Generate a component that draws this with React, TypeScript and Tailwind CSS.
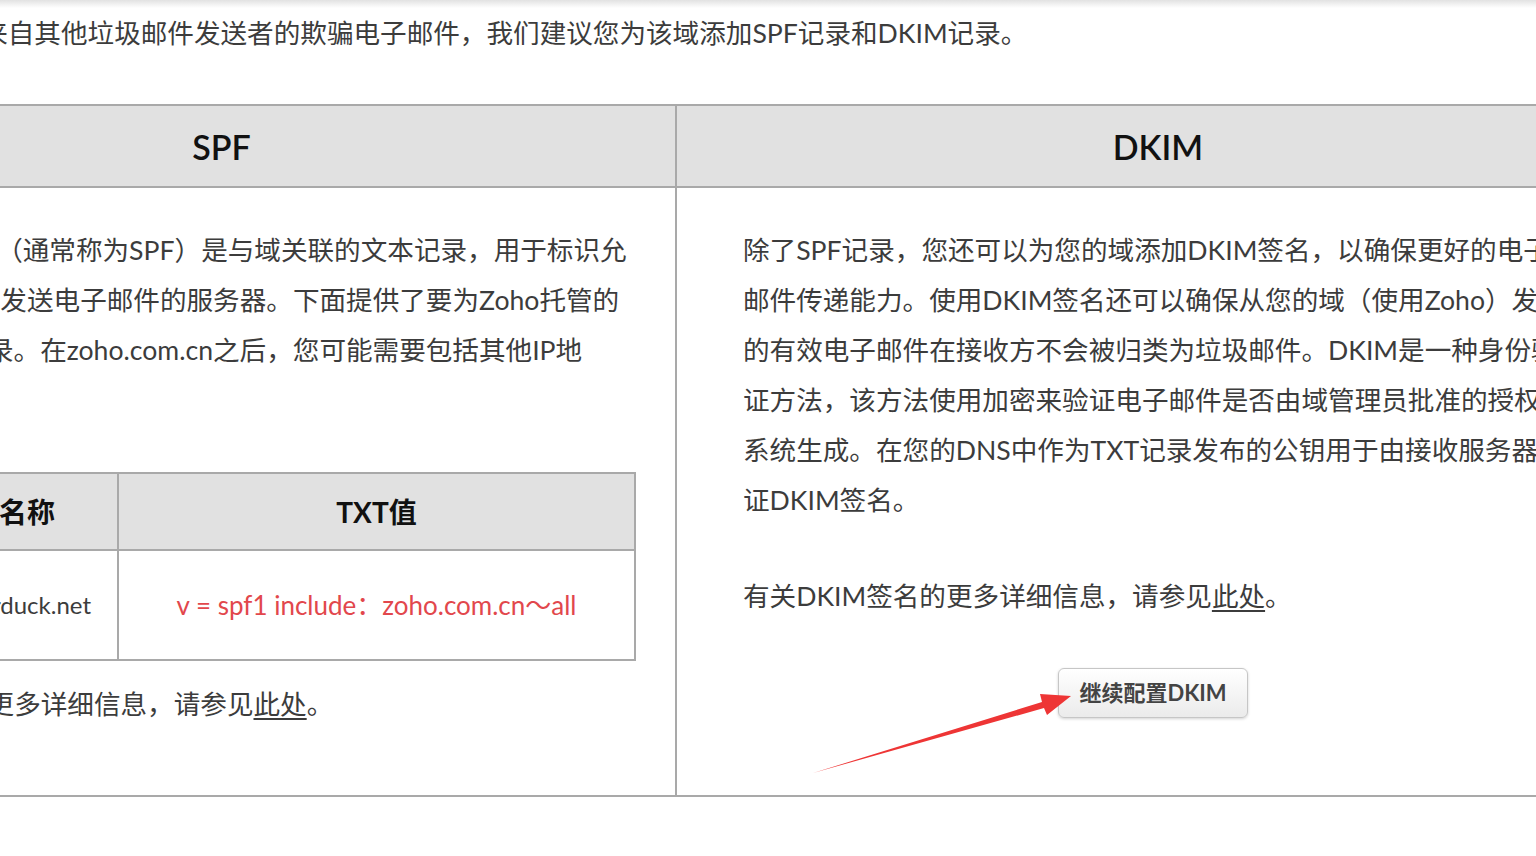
import React from "react";

const FONT = { fontFamily: 'Lato, "Noto Sans CJK SC", sans-serif' };

const dkimLines = [
  "除了SPF记录，您还可以为您的域添加DKIM签名，以确保更好的电子",
  "邮件传递能力。使用DKIM签名还可以确保从您的域（使用Zoho）发送",
  "的有效电子邮件在接收方不会被归类为垃圾邮件。DKIM是一种身份验",
  "证方法，该方法使用加密来验证电子邮件是否由域管理员批准的授权",
  "系统生成。在您的DNS中作为TXT记录发布的公钥用于由接收服务器验",
  "证DKIM签名。",
];

function Arrow() {
  return (
    <svg
      className="pointer-events-none absolute left-0 top-0"
      width="1536"
      height="856"
      viewBox="0 0 1536 856"
    >
      <polygon
        points="813,773 1042,702 1040,694 1071,696 1047,715 1044,708"
        fill="#ee3535"
      />
    </svg>
  );
}

export default function App() {
  return (
    <div
      className="relative h-[856px] w-[1536px] overflow-hidden bg-white text-[#3c3c3c]"
      style={FONT}
    >
      <div className="h-2 bg-gradient-to-b from-[#e2e2e2] to-white" />

      <div className="-ml-[232px] w-[1872px]">
        <p className="whitespace-nowrap pl-[160px] text-[26.6px] leading-[50px]">
          防止来自其他垃圾邮件发送者的欺骗电子邮件，我们建议您为该域添加SPF记录和DKIM记录。
        </p>

        <div className="mt-[46px] border-y-2 border-[#a9a9a9]">
          <div className="flex h-[82px] border-b-2 border-[#a9a9a9] bg-[#e1e1e1] text-[34px] font-semibold text-[#111]">
            <div className="flex w-[909px] items-center justify-center border-r-2 border-[#a9a9a9]">
              SPF
            </div>
            <div className="flex w-[962px] items-center justify-center">DKIM</div>
          </div>

          <div className="flex h-[607px]">
            <div className="w-[909px] border-r-2 border-[#a9a9a9] pt-[37px] text-[26.6px] leading-[50px]">
              <div className="whitespace-nowrap pl-[42px]">
                发件人策略框架（通常称为SPF）是与域关联的文本记录，用于标识允
              </div>
              <div className="whitespace-nowrap pl-[126px]">
                许从该域发送电子邮件的服务器。下面提供了要为Zoho托管的
              </div>
              <div className="whitespace-nowrap pl-[86px]">
                域添加的记录。在zoho.com.cn之后，您可能需要包括其他IP地
              </div>
              <div className="whitespace-nowrap pl-[68px]">址。</div>

              <div className="ml-[68px] mt-[47px] w-[800px] border-2 border-[#a9a9a9]">
                <div className="flex h-[77px] border-b-2 border-[#a9a9a9] bg-[#e1e1e1] text-[28px] font-bold text-[#111]">
                  <div className="flex w-[281px] items-center justify-end whitespace-nowrap border-r-2 border-[#a9a9a9] pr-[62px]">
                    主机名称
                  </div>
                  <div className="flex flex-1 items-center justify-center">TXT值</div>
                </div>
                <div className="flex h-[108px] text-[24px]">
                  <div className="flex w-[281px] items-center justify-end whitespace-nowrap border-r-2 border-[#a9a9a9] pr-[26px]">
                    zylkerduck.net
                  </div>
                  <div className="flex flex-1 items-center justify-center whitespace-nowrap text-[26px] text-[#e2474c]">
                    v = spf1 include：zoho.com.cn～all
                  </div>
                </div>
              </div>

              <div className="ml-[60px] mt-[18px] whitespace-nowrap">
                有关该记录的更多详细信息，请参见<span className="underline underline-offset-4">此处</span>。
              </div>
            </div>

            <div className="w-[962px] pl-[66px] pt-[37px] text-[26.6px] leading-[50px]">
              {dkimLines.map((line) => (
                <div key={line} className="whitespace-nowrap">
                  {line}
                </div>
              ))}
              <div className="mt-[46px] whitespace-nowrap">
                有关DKIM签名的更多详细信息，请参见<span className="underline underline-offset-4">此处</span>。
              </div>
              <button
                type="button"
                className="ml-[315px] mt-[47px] h-[50px] w-[190px] rounded-md border border-[#c6c6c6] bg-gradient-to-b from-white to-[#ebebeb] text-[22px] font-bold leading-none text-[#444] shadow-[0_1px_3px_rgba(0,0,0,0.18)]"
              >
                继续配置DKIM
              </button>
            </div>
          </div>
        </div>
      </div>

      <Arrow />
    </div>
  );
}
